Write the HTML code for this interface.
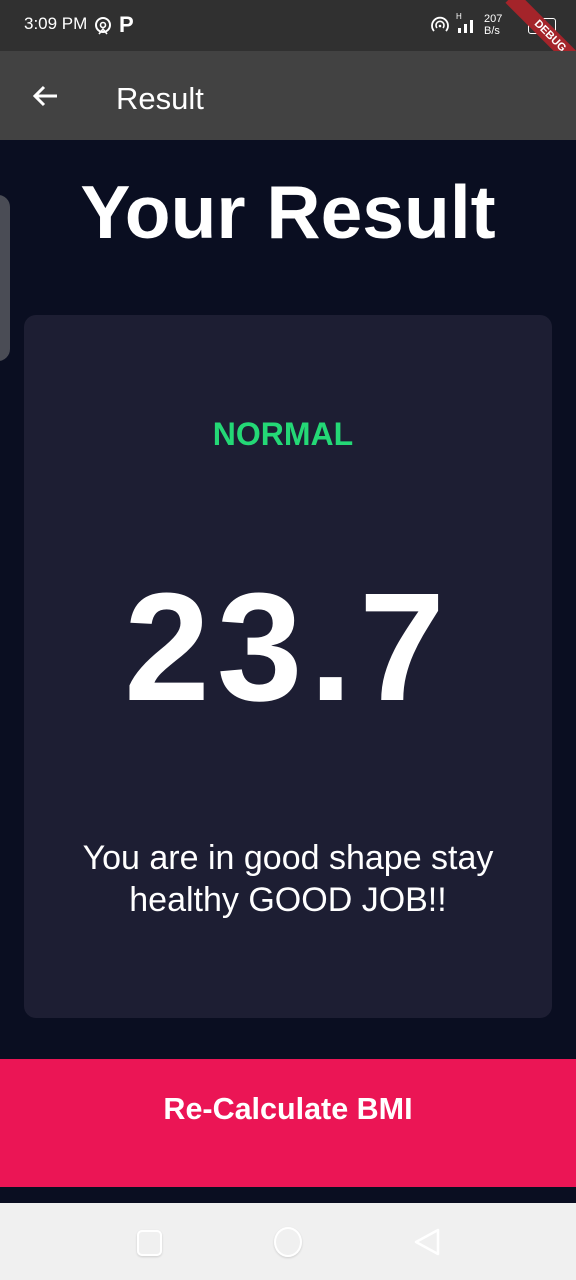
<!DOCTYPE html>
<html><head><style>
body{margin:0;width:576px;height:1280px;position:relative;background:#0a0e21;font-family:"Liberation Sans",Roboto,sans-serif;overflow:hidden}
.abs{position:absolute}
</style></head><body>
<div class="abs" style="left:0;top:0;width:576px;height:51px;background:#303030"></div>
<div class="abs" style="left:24px;top:14px;color:#fff;font-size:17px">3:09 PM</div>
<svg class="abs" style="left:93px;top:16px" width="20" height="20" viewBox="0 0 20 20"><circle cx="10" cy="9" r="7" fill="none" stroke="#fff" stroke-width="2"/><circle cx="10" cy="9" r="2.5" fill="none" stroke="#fff" stroke-width="1.6"/><path d="M6 18l4-5 4 5" fill="none" stroke="#fff" stroke-width="1.6"/></svg>
<div class="abs" style="left:119px;top:12px;color:#fff;font-size:22px;font-weight:bold">P</div>
<svg class="abs" style="left:430px;top:16px" width="20" height="20" viewBox="0 0 20 20"><path d="M4 15A8 8 0 1 1 16 15" fill="none" stroke="#fff" stroke-width="1.8"/><path d="M7 12A4 4 0 1 1 13 12" fill="none" stroke="#fff" stroke-width="1.6"/><circle cx="10" cy="10" r="1.3" fill="#fff"/></svg>
<div class="abs" style="left:456px;top:12px;color:#fff;font-size:8px">H</div>
<div class="abs" style="left:458px;top:28px;width:3px;height:5px;background:#fff"></div>
<div class="abs" style="left:464px;top:24px;width:3px;height:9px;background:#fff"></div>
<div class="abs" style="left:470px;top:20px;width:3px;height:13px;background:#fff"></div>
<div class="abs" style="left:484px;top:13px;color:#fff;font-size:11px;line-height:12px">207<br>B/s</div>
<div class="abs" style="left:528px;top:18px;width:26px;height:14px;border:1.5px solid #fff;border-radius:3px;color:#fff;font-size:11px;font-weight:bold;text-align:center;line-height:14px">19</div>
<div class="abs" style="left:495px;top:28px;width:110px;height:16px;background:#a4242a;transform:rotate(45deg);color:#fff;font-size:11px;font-weight:bold;text-align:center;line-height:16px">DEBUG</div>
<div class="abs" style="left:0;top:51px;width:576px;height:89px;background:#424242"></div>
<svg class="abs" style="left:30px;top:83px" width="30" height="26" viewBox="0 0 30 26"><path d="M27 13H5M14 4L5 13l9 9" fill="none" stroke="#fff" stroke-width="3"/></svg>
<div class="abs" style="left:116px;top:81px;color:#fff;font-size:31px">Result</div>
<div class="abs" style="left:-14px;top:195px;width:24px;height:166px;background:#4a4c55;border-radius:12px"></div>
<div class="abs" style="left:0;top:169px;width:576px;text-align:center;color:#fff;font-size:75px;font-weight:bold">Your Result</div>
<div class="abs" style="left:24px;top:315px;width:528px;height:703px;background:#1d1e33;border-radius:12px"></div>
<div class="abs" style="left:0;top:416px;width:566px;text-align:center;color:#24d876;font-size:32px;font-weight:bold">NORMAL</div>
<div class="abs" style="left:0;top:562px;width:576px;text-align:center;color:#fff;font-size:154px;font-weight:bold;line-height:170px;letter-spacing:7px">23.7</div>
<div class="abs" style="left:30px;top:837px;width:516px;text-align:center;color:#fff;font-size:34px;line-height:42px">You are in good shape stay healthy GOOD JOB!!</div>
<div class="abs" style="left:0;top:1059px;width:576px;height:128px;background:#eb1555;color:#fff;font-size:30.5px;font-weight:bold;text-align:center;line-height:100px">Re-Calculate BMI</div>
<div class="abs" style="left:0;top:1203px;width:576px;height:77px;background:#f0f0f0"></div>
<div class="abs" style="left:137px;top:1230px;width:21px;height:22px;border:2px solid #fff;border-radius:5px;box-shadow:0 1px 2px rgba(0,0,0,.15)"></div>
<div class="abs" style="left:274px;top:1227px;width:24px;height:26px;border:2px solid #fff;border-radius:50%;box-shadow:0 1px 2px rgba(0,0,0,.15)"></div>
<svg class="abs" style="left:412px;top:1227px" width="30" height="30" viewBox="0 0 30 30"><path d="M26 3L4 15l22 12z" fill="none" stroke="#fff" stroke-width="2.5" stroke-linejoin="round"/></svg>
</body></html>
